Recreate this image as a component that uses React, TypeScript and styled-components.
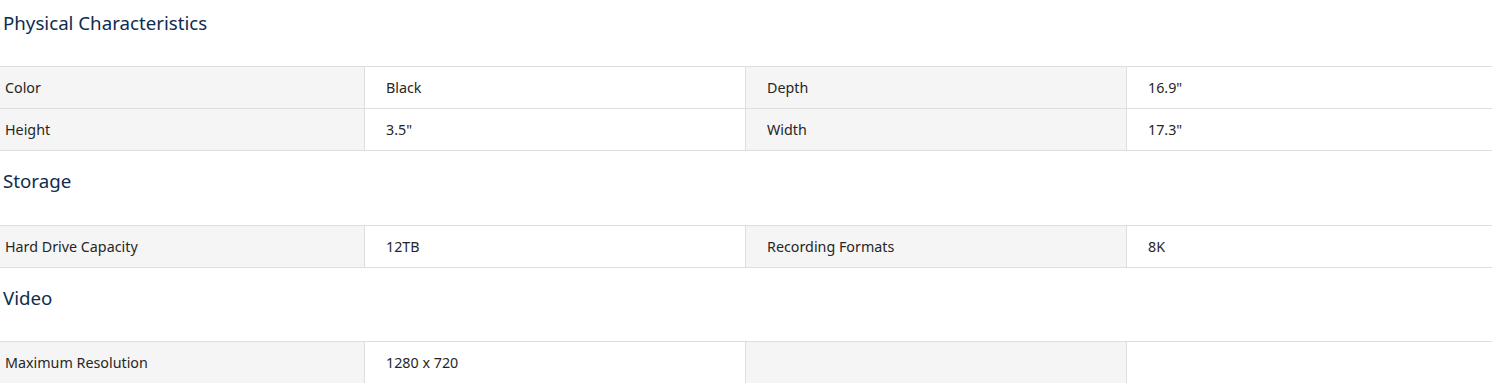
import styled, { createGlobalStyle } from "styled-components";

type Spec = [string, string];

const sections: { title: string; specs: Spec[] }[] = [
  {
    title: "Physical Characteristics",
    specs: [
      ["Color", "Black"],
      ["Depth", '16.9"'],
      ["Height", '3.5"'],
      ["Width", '17.3"'],
    ],
  },
  {
    title: "Storage",
    specs: [
      ["Hard Drive Capacity", "12TB"],
      ["Recording Formats", "8K"],
    ],
  },
  {
    title: "Video",
    specs: [["Maximum Resolution", "1280 x 720"]],
  },
];

const GlobalStyle = createGlobalStyle`
  body {
    margin: 0;
    background: #fff;
    font-family: "Noto Sans", "Open Sans", sans-serif;
  }
`;

const Page = styled.div`
  width: 1492px;
`;

// first heading sits flush with the top, later ones get extra room above
const Heading = styled.h3<{ $first?: boolean }>`
  margin: 0;
  padding: ${(p) => (p.$first ? "12px 3px 0" : "19px 3px 0")};
  height: ${(p) => (p.$first ? "54px" : "54.5px")};
  font-size: 18.7px;
  font-weight: 400;
  color: #0c2c52;
  line-height: 22px;
`;

const Table = styled.div`
  display: grid;
  grid-template-columns: 364px 381px 381px 1fr;
  border-top: 1px solid #dedede;
`;

const Cell = styled.div<{ $label?: boolean; $first?: boolean }>`
  height: 42px;
  box-sizing: border-box;
  display: flex;
  align-items: center;
  padding-left: ${(p) => (p.$first ? "5px" : "21px")};
  background: ${(p) => (p.$label ? "#f5f5f5" : "#fff")};
  border-bottom: 1px solid #dedede;
  border-left: ${(p) => (p.$first ? "none" : "1px solid #dedede")};
  font-size: 14.3px;
  color: #262626;
`;

export default function App() {
  return (
    <Page>
      <GlobalStyle />
      {sections.map((s, si) => {
        const cells: { text: string; label: boolean }[] = [];
        s.specs.forEach(([k, v]) => {
          cells.push({ text: k, label: true });
          cells.push({ text: v, label: false });
        });
        while (cells.length % 4 !== 0) {
          cells.push({ text: "", label: cells.length % 2 === 0 });
        }
        return (
          <section key={s.title}>
            <Heading $first={si === 0}>{s.title}</Heading>
            <Table>
              {cells.map((c, i) => (
                <Cell key={i} $label={c.label} $first={i % 4 === 0}>
                  {c.text}
                </Cell>
              ))}
            </Table>
          </section>
        );
      })}
    </Page>
  );
}
